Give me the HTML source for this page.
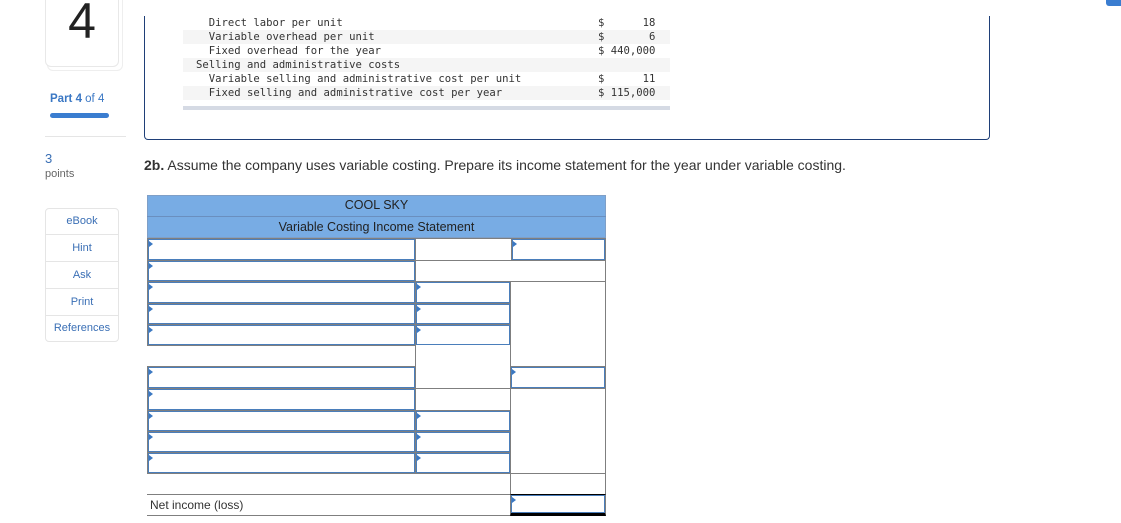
<!DOCTYPE html>
<html><head><meta charset="utf-8"><style>
*{margin:0;padding:0;box-sizing:border-box}
body{width:1121px;height:523px;background:#fff;position:relative;overflow:hidden;font-family:"Liberation Sans",Arial,sans-serif}
.a{position:absolute}
.mono{font-family:"DejaVu Sans Mono","Liberation Mono",monospace;font-size:10.6px;color:#333;white-space:pre;line-height:14px}
.c{position:absolute;border:1px solid #7f7f7f;background:#fff}
.i{position:absolute;border:1px solid #7f7f7f;background:#fff;box-shadow:inset 0 0 0 1px #4a7ebb}
.i::before{content:"";position:absolute;left:1px;top:2px;border-left:4px solid #3b78c2;border-top:3px solid transparent;border-bottom:3px solid transparent}
.sb{position:absolute;left:45px;width:74px;height:27px;font-size:11px;color:#3a6fb5;text-align:center;line-height:27px;border-bottom:1px solid #e5e5e5}
</style></head><body>
<div class="a" style="left:47px;top:-10px;width:76px;height:81px;border:1px solid #eee;border-radius:6px"></div>
<div class="a" style="left:45px;top:-10px;width:74px;height:77px;border:1px solid #e8e8e8;border-radius:6px;background:#fff;text-align:center;font-size:50px;line-height:60px;color:#222">4</div>
<div class="a" style="left:50px;top:93px;font-size:11.5px;color:#3a77c4"><b>Part 4</b> of 4</div>
<div class="a" style="left:50px;top:113px;width:59px;height:5px;background:#3a7dd0;border-radius:3px"></div>
<div class="a" style="left:45px;top:136px;width:81px;height:1px;background:#e5e5e5"></div>
<div class="a" style="left:45px;top:151px;font-size:13px;color:#3a6fb5">3</div>
<div class="a" style="left:45px;top:168px;font-size:11px;color:#666">points</div>
<div class="a" style="left:45px;top:208px;width:74px;height:134px;border:1px solid #e5e5e5;border-radius:4px"></div>
<div class="sb" style="top:208px">eBook</div>
<div class="sb" style="top:235px">Hint</div>
<div class="sb" style="top:262px">Ask</div>
<div class="sb" style="top:289px">Print</div>
<div class="sb" style="top:315px;border:none">References</div>
<div class="a" style="left:144px;top:16px;width:846px;height:124px;border:1.5px solid #1f3f78;border-top:none;border-radius:0 0 4px 4px"></div>
<div class="a" style="left:183px;top:30px;width:487px;height:14px;background:#f5f5f5"></div>
<div class="a" style="left:183px;top:58px;width:487px;height:14px;background:#f5f5f5"></div>
<div class="a" style="left:183px;top:86px;width:487px;height:14px;background:#f5f5f5"></div>
<div class="a" style="left:183px;top:106px;width:487px;height:4px;background:#d5dae4"></div>
<div class="a mono" style="left:196px;top:16px">  Direct labor per unit
  Variable overhead per unit
  Fixed overhead for the year
Selling and administrative costs
  Variable selling and administrative cost per unit
  Fixed selling and administrative cost per year</div>
<div class="a mono" style="left:598px;top:16px">$      18
$       6
$ 440,000

$      11
$ 115,000</div>
<div class="a" style="left:1106px;top:-4px;width:20px;height:10px;background:#3a7dd0;border-radius:3px"></div>
<div class="a" style="left:144px;top:157px;font-size:14px;color:#333;white-space:nowrap"><b>2b.</b> Assume the company uses variable costing. Prepare its income statement for the year under variable costing.</div>
<div class="a" style="left:147px;top:195px;width:459px;height:43px;background:#78ace4;border:1px solid #7f9fc7"></div>
<div class="a" style="left:147px;top:216px;width:459px;height:1px;background:#6a8fbf"></div>
<div class="a" style="left:147px;top:198px;width:459px;text-align:center;font-size:12.5px;color:#222">COOL SKY</div>
<div class="a" style="left:147px;top:220px;width:459px;text-align:center;font-size:12.5px;color:#222">Variable Costing Income Statement</div>

<div class="i" style="left:147px;top:238px;width:269px;height:23px"></div>
<div class="c" style="left:415px;top:238px;width:97px;height:23px"></div>
<div class="i" style="left:511px;top:238px;width:95px;height:23px"></div>
<div class="i" style="left:147px;top:260px;width:269px;height:22px"></div>
<div class="c" style="left:415px;top:260px;width:191px;height:22px"></div>
<div class="i" style="left:147px;top:281px;width:269px;height:23px"></div>
<div class="i" style="left:415px;top:281px;width:96px;height:23px"></div>
<div class="i" style="left:147px;top:303px;width:269px;height:22px"></div>
<div class="i" style="left:415px;top:303px;width:96px;height:22px"></div>
<div class="i" style="left:147px;top:324px;width:269px;height:22px"></div>
<div class="i" style="left:415px;top:324px;width:96px;height:22px"></div>
<div class="c" style="left:510px;top:281px;width:96px;height:65px;border-bottom:1px solid #000"></div>
<div class="c" style="left:415px;top:345px;width:96px;height:22px;border-bottom:1px solid #000;border-top:none"></div>
<div class="c" style="left:510px;top:345px;width:96px;height:22px;border-top:none"></div>

<div class="i" style="left:147px;top:366px;width:269px;height:23px"></div>
<div class="c" style="left:415px;top:366px;width:96px;height:23px;border-top:none"></div>
<div class="i" style="left:510px;top:366px;width:96px;height:23px"></div>
<div class="i" style="left:147px;top:388px;width:269px;height:23px"></div>
<div class="c" style="left:415px;top:388px;width:96px;height:23px"></div>
<div class="c" style="left:510px;top:388px;width:96px;height:86px"></div>
<div class="i" style="left:147px;top:410px;width:269px;height:22px"></div>
<div class="i" style="left:415px;top:410px;width:96px;height:22px"></div>
<div class="i" style="left:147px;top:431px;width:269px;height:22px"></div>
<div class="i" style="left:415px;top:431px;width:96px;height:22px"></div>
<div class="i" style="left:147px;top:452px;width:269px;height:22px"></div>
<div class="i" style="left:415px;top:452px;width:96px;height:22px"></div>
<div class="c" style="left:510px;top:473px;width:96px;height:22px"></div>
<div class="a" style="left:147px;top:494px;width:364px;height:22px;border-top:1px solid #7f7f7f;border-bottom:1px solid #7f7f7f"></div>
<div class="a" style="left:150px;top:498px;font-size:12px;color:#333">Net income (loss)</div>
<div class="i" style="left:510px;top:494px;width:96px;height:22px;border-top:1px solid #000;border-bottom:3px solid #000"></div>
</body></html>
